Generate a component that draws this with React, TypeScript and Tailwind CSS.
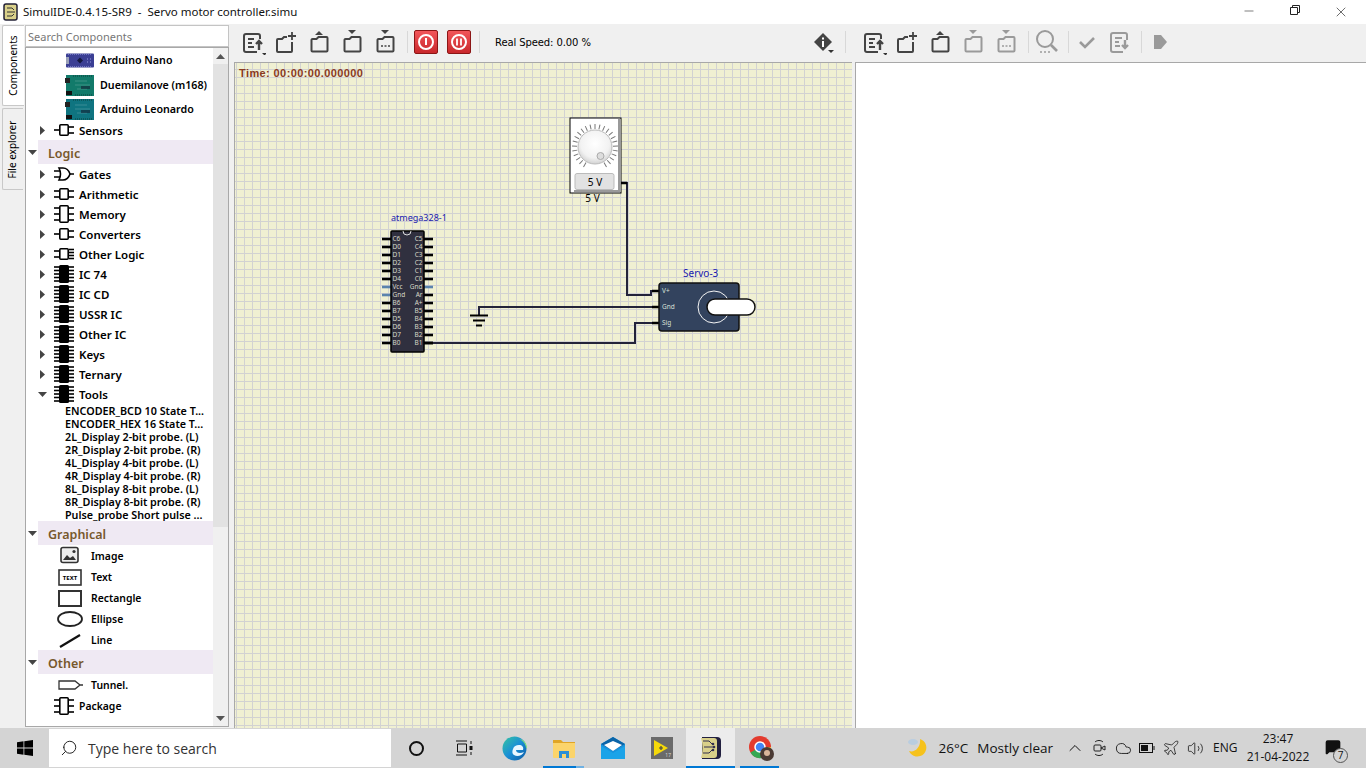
import type { ReactNode } from "react";
import { Search, Minus, X, ChevronUp, Volume2, Plane, Cloud, MessageSquare } from "lucide-react";

const leftPins = ["C6", "D0", "D1", "D2", "D3", "D4", "Vcc", "Gnd", "B6", "B7", "D5", "D6", "D7", "B0"];
const rightPins = ["C5", "C4", "C3", "C2", "C1", "C0", "Gnd", "Ar", "A+", "B5", "B4", "B3", "B2", "B1"];

const tools = [
    "ENCODER_BCD 10 State T...",
    "ENCODER_HEX 16 State T...",
    "2L_Display 2-bit probe. (L)",
    "2R_Display 2-bit probe. (R)",
    "4L_Display 4-bit probe. (L)",
    "4R_Display 4-bit probe. (R)",
    "8L_Display 8-bit probe. (L)",
    "8R_Display 8-bit probe. (R)",
    "Pulse_probe Short pulse ...",
];

function Arrow({ open }: { open?: boolean }) {
    return (
        <svg width="9" height="9" viewBox="0 0 9 9">
            {open ? <path d="M0 2h9L4.5 7z" fill="#444" /> : <path d="M2 0l5 4.5L2 9z" fill="#444" />}
        </svg>
    );
}

function PartIcon({ kind }: { kind: "one" | "two" | "tall" | "gate" | "mix" | "ic" }) {
    if (kind === "ic") {
        return (
            <svg width="22" height="20" viewBox="0 0 22 20">
                <rect x="6" y="1" width="10" height="18" rx="1.5" fill="#000" />
                {[3, 6.5, 10, 13.5, 17].map((y) => (
                    <path key={y} d={`M1 ${y}h20`} stroke="#000" strokeWidth="1.6" />
                ))}
            </svg>
        );
    }
    if (kind === "gate") {
        return (
            <svg width="22" height="20" viewBox="0 0 22 20">
                <path d="M6 4h4c4 0 6 3 7 6-1 3-3 6-7 6H6c2-4 2-8 0-12z" fill="#fff" stroke="#000" strokeWidth="1.6" />
                <path d="M1 7h6M1 13h6M17 10h4" stroke="#000" strokeWidth="1.6" />
            </svg>
        );
    }
    const tall = kind === "tall";
    const rows = tall ? [4, 10, 16] : kind === "one" ? [10] : [7, 13];
    return (
        <svg width="22" height="20" viewBox="0 0 22 20">
            <rect x="6.8" y={tall ? 1.8 : 4.8} width="8.4" height={tall ? 16.4 : 10.4} rx="1" fill="#fff" stroke="#000" strokeWidth="1.6" />
            {(kind === "mix" ? [7, 13] : rows).map((y) => (
                <path key={y} d={`M1 ${y}h5`} stroke="#000" strokeWidth="1.6" />
            ))}
            {(kind === "one" ? [7, 13] : kind === "mix" ? [5.5, 8.5, 11.5, 14.5] : rows).map((y) => (
                <path key={y} d={`M16 ${y}h5`} stroke="#000" strokeWidth="1.6" />
            ))}
        </svg>
    );
}

function Board({ color, nano }: { color: string; nano?: boolean }) {
    if (nano) {
        return (
            <svg width="28" height="15" viewBox="0 0 28 15">
                <rect width="28" height="14" y="0.5" rx="1" fill="#3b3f94" />
                <rect x="0" y="4" width="3" height="7" fill="#9aa0b8" />
                <path d="M11 7.5l3-3 3 3-3 3z" fill="#14183f" />
                <path d="M2 1.5h24M2 13.5h24" stroke="#7277c4" strokeDasharray="1 1" />
                <path d="M21 6h1M24 6h1M21 9h1M24 9h1" stroke="#9aa0e0" />
            </svg>
        );
    }
    return (
        <svg width="29" height="21" viewBox="0 0 29 21">
            <rect x="1" y="0" width="28" height="21" fill={color} />
            <rect x="0" y="3" width="5" height="5" fill="#222" />
            <rect x="1" y="16" width="6" height="4" fill="#111" />
            <path d="M8 1h19M10 20h17" stroke="#0c3d38" strokeDasharray="1 1" />
            <path d="M10 6h12M10 10h15M12 14h10" stroke="#ffffff" strokeOpacity="0.18" />
            <rect x="16" y="11" width="9" height="3" fill="#123" opacity="0.6" />
        </svg>
    );
}

function GraphicIcon({ kind }: { kind: string }) {
    return (
        <svg width="26" height="20" viewBox="0 0 26 20">
            {kind === "image" && (
                <g>
                    <rect x="4" y="1.5" width="17" height="15" rx="2" fill="#eee" stroke="#333" strokeWidth="1.6" />
                    <path d="M6 14l4-5 3 3 3-2 3 4z" fill="#333" />
                    <circle cx="17" cy="5.5" r="1.6" fill="#333" />
                </g>
            )}
            {kind === "text" && (
                <g>
                    <rect x="2" y="3" width="22" height="15" fill="#fff" stroke="#333" strokeWidth="1.6" />
                    <text x="13" y="13" textAnchor="middle" className="fill-black text-[6px] font-bold">TEXT</text>
                </g>
            )}
            {kind === "rect" && <rect x="2" y="3" width="22" height="15" fill="#fff" stroke="#333" strokeWidth="2" />}
            {kind === "ellipse" && <ellipse cx="13" cy="10" rx="12" ry="7" fill="#fff" stroke="#222" strokeWidth="1.8" />}
            {kind === "line" && <path d="M3 17L23 5" stroke="#111" strokeWidth="2.2" />}
            {kind === "tunnel" && <path d="M2 6h16l5 4-5 4H2zM23 10h3" fill="#fff" stroke="#333" strokeWidth="1.3" />}
        </svg>
    );
}

function TreeRow({ label, kind, open }: { label: string; kind: "one" | "two" | "tall" | "gate" | "mix" | "ic"; open?: boolean }) {
    return (
        <div className="flex h-5 items-center">
            <div className="flex w-[27px] justify-end pr-[6px]"><Arrow open={open} /></div>
            <PartIcon kind={kind} />
            <span className="ml-[4px] pt-[2px] text-[11.5px] font-semibold">{label}</span>
        </div>
    );
}

function BoardRow({ label, children, tall }: { label: string; children: ReactNode; tall?: boolean }) {
    return (
        <div className={`flex items-center ${tall ? "h-[25px]" : "h-6"}`}>
            <div className="flex w-[74px] justify-end pr-[6px]">{children}</div>
            <span className="text-[10.7px] font-semibold">{label}</span>
        </div>
    );
}

function Category({ label }: { label: string }) {
    return (
        <div className="flex h-6 items-center">
            <div className="flex w-[12px] justify-center"><Arrow open /></div>
            <div className="flex h-full flex-1 items-center bg-[#efe9f3] pl-[10px] pt-[4px] text-[12.5px] font-semibold text-[#77582c]">{label}</div>
        </div>
    );
}

function GraphicRow({ label, kind }: { label: string; kind: string }) {
    return (
        <div className="flex h-[21px] items-center">
            <div className="flex w-[57px] justify-end"><GraphicIcon kind={kind} /></div>
            <span className="ml-[8px] pt-[2px] text-[10.4px] font-semibold">{label}</span>
        </div>
    );
}

function ToolIcon({ kind, dim }: { kind: string; dim?: boolean }) {
    const c = dim ? "#9a9a9a" : "#444";
    const folder = "M2.5 22.5a1 1 0 0 1-1-1V11a1 1 0 0 1 1-1h4l2-2h8a1 1 0 0 1 1 1v12.5a1 1 0 0 1-1 1z";
    return (
        <svg width="24" height="26" viewBox="0 0 24 26" fill="none" stroke={c} strokeWidth="2">
            {kind === "listUp" && (
                <g>
                    <path d="M15 23H4a2 2 0 0 1-2-2V7a2 2 0 0 1 2-2h12a2 2 0 0 1 2 2v3" />
                    <path d="M6 10h6M6 14h4M6 18h6" />
                    <path d="M17 21v-8M14 15l3-3 3 3" strokeWidth="2.4" />
                    <path d="M20 24h5l-2.5 2.5z" fill="#333" stroke="none" />
                </g>
            )}
            {kind === "listDown" && (
                <g>
                    <path d="M15 23H5a2 2 0 0 1-2-2V6a2 2 0 0 1 2-2h12a2 2 0 0 1 2 2v5" />
                    <path d="M7 9h7M7 13h4M7 17h5" />
                    <path d="M17 11v8M14 16l3 3 3-3" strokeWidth="2.4" />
                </g>
            )}
            {kind === "plus" && (
                <g>
                    <path d="M17 13v9a1 1 0 0 1-1 1H3a1 1 0 0 1-1-1V11a1 1 0 0 1 1-1h4l2-2h3" />
                    <path d="M17 3v8M13 7h8" strokeWidth="1.8" />
                </g>
            )}
            {kind === "up" && (
                <g>
                    <path d={folder} transform="translate(2 0)" />
                    <path d="M7 6l4-4 4 4z" fill={c} stroke="none" />
                </g>
            )}
            {kind === "down" && (
                <g>
                    <path d={folder} transform="translate(2 0)" />
                    <path d="M7 1h8l-4 4z" fill={c} stroke="none" />
                </g>
            )}
            {kind === "dots" && (
                <g>
                    <path d={folder} transform="translate(2 0)" />
                    <path d="M7 1h8l-4 4z" fill={c} stroke="none" />
                    <path d="M7 17h2M10.5 17h2M14 17h2" strokeWidth="1.6" />
                </g>
            )}
            {kind === "search" && (
                <g>
                    <circle cx="10" cy="10" r="8" />
                    <path d="M16 16l6 6" strokeWidth="2.6" />
                    <path d="M5 23h2M9 23h2M13 23h2" strokeWidth="1.4" />
                </g>
            )}
            {kind === "check" && <path d="M5 13l5 5 9-9" strokeWidth="2.6" />}
            {kind === "play" && <path d="M6 6h7l6 7-6 7H6z" fill={c} stroke="none" />}
        </svg>
    );
}

function ToolSlot({ kind, dim }: { kind: string; dim?: boolean }) {
    return <div className="flex w-[33px] justify-center"><ToolIcon kind={kind} dim={dim} /></div>;
}

function Sep() {
    return <div className="h-[22px] w-px bg-[#d8d8d8]" />;
}

function PowerButton({ pause }: { pause?: boolean }) {
    return (
        <div className="flex h-6 w-6 items-center justify-center rounded-[2px] border border-[#8c1515] bg-[linear-gradient(#f2565a,#c9282c)]">
            <svg width="18" height="18" viewBox="0 0 18 18" fill="none" stroke="#fff">
                <circle cx="9" cy="9" r="7" strokeWidth="2" />
                {pause ? <path d="M7 5.5v7M11 5.5v7" strokeWidth="1.8" /> : <path d="M9 5v7" strokeWidth="2" />}
            </svg>
        </div>
    );
}

function Circuit() {
    const ticks = Array.from({ length: 25 }, (_, i) => -150 + i * 12.5);
    return (
        <svg viewBox="235 63 617 665" className="absolute inset-0 h-full w-full">
            <text x="391" y="221" className="fill-[#1a1ab0] text-[9px]">atmega328-1</text>
            {leftPins.map((p, i) => (
                <path key={p + i} d={`M382 ${239 + i * 8}h9`} stroke={i === 6 || i === 7 ? "#5b83ad" : "#000"} strokeWidth="2.6" />
            ))}
            {rightPins.map((p, i) => (
                <path key={p + i} d={`M424 ${239 + i * 8}h9`} stroke={i === 6 ? "#5b83ad" : "#000"} strokeWidth="2.6" />
            ))}
            <rect x="391" y="231" width="33" height="121" rx="1" fill="#30303f" stroke="#000" strokeWidth="1.5" />
            <path d="M403 231a4 4 0 0 0 8 0" fill="none" stroke="#ddd" />
            {leftPins.map((p, i) => (
                <text key={p + i} x="392.5" y={241 + i * 8} className="fill-[#d8d8c8] text-[6.5px]">{p}</text>
            ))}
            {rightPins.map((p, i) => (
                <text key={p + i} x="422.5" y={241 + i * 8} textAnchor="end" className="fill-[#d8d8c8] text-[6.5px]">{p}</text>
            ))}

            <g fill="none" stroke="#23233a" strokeWidth="2">
                <path d="M621 183h6v112h24v-4h9" />
                <path d="M479 316v-9h181" />
                <path d="M424 343h211v-20h25" />
            </g>
            <path d="M470 315.5h18M473 320.5h12M476 325.5h6" stroke="#000" strokeWidth="2" />
            <path d="M621 183h6M652 291h8M652 307h8M652 323h8M424 343h9" stroke="#000" strokeWidth="2.4" />

            <rect x="570" y="118" width="51" height="75" fill="#fff" stroke="#000" />
            <path d="M618 119h3v73h-47v-2h44z" fill="#9a9a9a" />
            {ticks.map((t) => (
                <path key={t} d="M595 124v5" stroke="#777" transform={`rotate(${t} 595 147)`} />
            ))}
            <defs>
                <radialGradient id="knob" cx="50%" cy="40%" r="60%">
                    <stop offset="0%" stopColor="#fff" />
                    <stop offset="70%" stopColor="#f2f2f2" />
                    <stop offset="100%" stopColor="#d2d2d2" />
                </radialGradient>
            </defs>
            <circle cx="595" cy="147" r="17" fill="url(#knob)" stroke="#bbb" />
            <circle cx="600.5" cy="156" r="3.5" fill="#ddd" stroke="#aaa" />
            <rect x="575" y="173.500" width="39" height="16" rx="2" fill="#e2e2e2" stroke="#bbb" />
            <text x="595" y="186" textAnchor="middle" className="fill-black text-[10px]">5 V</text>
            <text x="592.500" y="202" textAnchor="middle" className="fill-black text-[10px]">5 V</text>

            <text x="683" y="277" className="fill-[#1a1ab0] text-[10px]">Servo-3</text>
            <rect x="659" y="283" width="80" height="48" rx="3" fill="#33435e" stroke="#111" strokeWidth="1.5" />
            <text x="662" y="293" className="fill-[#d8e0d8] text-[6.5px]">V+</text>
            <text x="662" y="309" className="fill-[#d8e0d8] text-[6.5px]">Gnd</text>
            <text x="662" y="325" className="fill-[#d8e0d8] text-[6.5px]">Sig</text>
            <circle cx="714" cy="307" r="16" fill="none" stroke="#f5f5f5" />
            <rect x="707" y="299" width="48" height="16" rx="8" fill="#fff" stroke="#111" strokeWidth="1.5" />
        </svg>
    );
}

function TrayIcon({ children, w }: { children: ReactNode; w: string }) {
    return <div className={`flex justify-center ${w}`}>{children}</div>;
}

function TaskSlot({ children, active, bar }: { children: ReactNode; active?: boolean; bar?: string }) {
    return (
        <div className={`relative flex h-full w-[49px] items-center justify-center ${active ? "bg-[#ececec]" : ""}`}>
            {children}
            {bar && <div className={`absolute bottom-0 h-[2px] ${bar}`} />}
        </div>
    );
}

export default function App() {
    return (
        <div className="flex h-[768px] w-[1366px] flex-col overflow-hidden bg-[#f0f0f0] font-['Noto_Sans',sans-serif] text-black">
            {/* title bar */}
            <div className="flex h-6 items-center bg-white">
                <svg width="16" height="18" viewBox="0 0 16 18" className="ml-[3px]">
                    <rect x="1" y="1" width="13" height="16" rx="2" fill="#d9d08a" stroke="#222036" strokeWidth="1.5" />
                    <path d="M4 5h5l2 2M4 9h8M4 13h5l2-2" stroke="#333" fill="none" />
                </svg>
                <span className="ml-[4px] text-[11.5px] text-[#111]">SimulIDE-0.4.15-SR9&nbsp; -&nbsp; Servo motor controller.simu</span>
                <div className="ml-auto mr-[2px] flex text-[#222]">
                    <div className="flex w-[46px] justify-center"><Minus size={14} strokeWidth={1} /></div>
                    <div className="flex w-[46px] justify-center">
                        <svg width="12" height="12" viewBox="0 0 12 12" fill="none" stroke="#222">
                            <path d="M1.500 3.500h7v7h-7zM3.500 3.500v-2h7v7h-2" />
                        </svg>
                    </div>
                    <div className="flex w-[46px] justify-center"><X size={16} strokeWidth={1} /></div>
                </div>
            </div>

            <div className="flex min-h-0 flex-1">
                {/* side tabs */}
                <div className="flex w-[25px] flex-col pl-[2px] pt-px">
                    <div className="flex h-[81px] w-[22px] items-center justify-center rounded-l-[2px] border border-r-0 border-[#c8c8c8] bg-white">
                        <span className="-rotate-90 whitespace-nowrap text-[10px]">Components</span>
                    </div>
                    <div className="mt-[2px] flex h-[82px] w-[21px] items-center justify-center rounded-l-[2px] border border-r-0 border-[#c8c8c8] bg-[#f0f0f0]">
                        <span className="-rotate-90 whitespace-nowrap text-[10px]">File explorer</span>
                    </div>
                </div>

                {/* components panel */}
                <div className="flex w-[204px] flex-col pt-px">
                    <div className="flex h-[22px] items-center border border-[#c4c4c4] bg-white pl-[2px] pt-[2px] text-[11px] text-[#777]">Search Components</div>
                    <div className="flex h-[680px] border border-[#a8a8a8] bg-white">
                        <div className="flex-1 overflow-hidden">
                            <BoardRow label="Arduino Nano" tall><Board color="#3b3f94" nano /></BoardRow>
                            <BoardRow label="Duemilanove (m168)"><Board color="#127a6a" /></BoardRow>
                            <BoardRow label="Arduino Leonardo"><Board color="#0f7480" /></BoardRow>
                            <div className="-mt-px"><TreeRow label="Sensors" kind="one" /></div>
                            <Category label="Logic" />
                            <TreeRow label="Gates" kind="gate" />
                            <TreeRow label="Arithmetic" kind="two" />
                            <TreeRow label="Memory" kind="tall" />
                            <TreeRow label="Converters" kind="one" />
                            <TreeRow label="Other Logic" kind="mix" />
                            {["IC 74", "IC CD", "USSR IC", "Other IC", "Keys", "Ternary"].map((l) => (
                                <TreeRow key={l} label={l} kind="ic" />
                            ))}
                            <TreeRow label="Tools" kind="ic" open />
                            {tools.map((t) => (
                                <div key={t} className="flex h-[13px] items-center whitespace-nowrap pl-[39px] pt-[2px] text-[10.75px] font-semibold">{t}</div>
                            ))}
                            <Category label="Graphical" />
                            <GraphicRow label="Image" kind="image" />
                            <GraphicRow label="Text" kind="text" />
                            <GraphicRow label="Rectangle" kind="rect" />
                            <GraphicRow label="Ellipse" kind="ellipse" />
                            <GraphicRow label="Line" kind="line" />
                            <Category label="Other" />
                            <GraphicRow label="Tunnel." kind="tunnel" />
                            <div className="flex h-[21px] items-center">
                                <div className="w-[27px]" />
                                <PartIcon kind="tall" />
                                <span className="ml-[4px] pt-[2px] text-[10.4px] font-semibold">Package</span>
                            </div>
                        </div>
                        {/* scrollbar */}
                        <div className="flex w-[15px] flex-col bg-[#f0f0f0]">
                            <div className="flex h-[16px] items-center justify-center">
                                <svg width="9" height="5" viewBox="0 0 9 5"><path d="M0 5l4.5-5L9 5z" fill="#555" /></svg>
                            </div>
                            <div className="h-[463px] bg-[#e2e2e2]" />
                            <div className="mt-auto flex h-[16px] items-center justify-center">
                                <svg width="9" height="5" viewBox="0 0 9 5"><path d="M0 0l4.5 5L9 0z" fill="#555" /></svg>
                            </div>
                        </div>
                    </div>
                </div>

                <div className="w-[5px]" />

                {/* toolbars and editors */}
                <div className="flex flex-1 flex-col">
                    <div className="flex h-[38px] items-center pb-[2px]">
                        <div className="flex w-[621px] items-center pl-[3px]">
                            <ToolSlot kind="listUp" />
                            <ToolSlot kind="plus" />
                            <ToolSlot kind="up" />
                            <ToolSlot kind="down" />
                            <ToolSlot kind="dots" />
                            <div className="ml-[5px] mr-[6px]"><Sep /></div>
                            <PowerButton />
                            <div className="w-[9px]" />
                            <PowerButton pause />
                            <div className="ml-[8px] mr-[15px]"><Sep /></div>
                            <span className="font-['DejaVu_Sans',sans-serif] text-[10px] tracking-[-0.1px]">Real Speed: 0.00 %</span>
                            <div className="ml-auto mr-[9px] flex items-center">
                                <div className="relative mr-[12px]">
                                    <svg width="20" height="20" viewBox="0 0 20 20">
                                        <path d="M10 1l9 9-9 9-9-9z" fill="#444" />
                                        <path d="M10 5.500v2M10 9v6" stroke="#fff" strokeWidth="2" />
                                    </svg>
                                    <svg width="6" height="3" viewBox="0 0 6 3" className="absolute -right-[1px] top-[18px]"><path d="M0 0h6L3 3z" fill="#333" /></svg>
                                </div>
                                <Sep />
                            </div>
                        </div>
                        <div className="flex items-center pl-[3px]">
                            <ToolSlot kind="listUp" />
                            <ToolSlot kind="plus" />
                            <ToolSlot kind="up" />
                            <ToolSlot kind="down" dim />
                            <ToolSlot kind="dots" dim />
                            <div className="ml-[5px] mr-[6px]"><Sep /></div>
                            <ToolIcon kind="search" dim />
                            <div className="ml-[9px] mr-[6px]"><Sep /></div>
                            <ToolIcon kind="check" dim />
                            <div className="w-[9px]" />
                            <ToolIcon kind="listDown" dim />
                            <div className="ml-[9px] mr-[6px]"><Sep /></div>
                            <ToolIcon kind="play" dim />
                        </div>
                    </div>
                    <div className="flex min-h-0 flex-1">
                        <div className="relative w-[618px] border-l border-t border-[#a8a8a8] bg-[#f0f0d2] bg-[linear-gradient(#d2d2d2_1px,transparent_1px),linear-gradient(90deg,#d2d2d2_1px,transparent_1px)] bg-[size:8px_8px] bg-[position:1px_6px]">
                            <Circuit />
                            <div className="absolute left-[4px] top-[2px] font-['Liberation_Sans',sans-serif] text-[11px] font-bold tracking-[0.4px] text-[#8a3a1e]">Time: 00:00:00.000000</div>
                        </div>
                        <div className="w-[3px]" />
                        <div className="flex-1 border-l border-t border-[#a8a8a8] bg-white" />
                    </div>
                </div>
            </div>

            {/* taskbar */}
            <div className="flex h-10 items-center bg-[#d4d4d4] font-['Open_Sans',sans-serif]">
                <div className="flex w-[49px] justify-center">
                    <svg width="16" height="16" viewBox="0 0 16 16" fill="#000"><path d="M0 2.200l6.500-.9v6.300H0zM7.300 1.200L16 0v7.600H7.300zM0 8.400h6.500v6.300L0 13.800zM7.300 8.400H16V16l-8.700-1.200z" /></svg>
                </div>
                <div className="flex h-[38px] w-[342px] items-center bg-white pl-[11px] text-[14px] text-[#333]">
                    <Search size={18} strokeWidth={1.3} className="-scale-x-100 text-[#222]" />
                    <span className="ml-[10px]">Type here to search</span>
                </div>
                <div className="ml-px flex h-full">
                    <TaskSlot>
                        <div className="h-[15px] w-[15px] rounded-full border-2 border-[#111]" />
                    </TaskSlot>
                    <TaskSlot>
                        <svg width="18" height="16" viewBox="0 0 18 16" fill="none" stroke="#111" className="-ml-[3px]"><path d="M1 1h11M1 15h11M2.500 4h9v8h-9zM16 1v3M16 12v3" /><rect x="14.500" y="6" width="3" height="4" fill="#111" stroke="none" /></svg>
                    </TaskSlot>
                    <TaskSlot>
                        <svg width="25" height="25" viewBox="0 0 25 25">
                            <defs>
                                <linearGradient id="edge" x1="0" y1="0" x2="1" y2="1"><stop offset="0" stopColor="#36c5a0" /><stop offset="0.5" stopColor="#1a8fd6" /><stop offset="1" stopColor="#0c59a4" /></linearGradient>
                            </defs>
                            <circle cx="12.500" cy="12.500" r="12" fill="url(#edge)" />
                            <path d="M11 13c1-3 3-4 6-4 3 0 5 2 4 5h-7c0 3 4 4 8 2-2 4-7 5-10 3-2-1-2-4-1-6z" fill="#e8f6ff" />
                            <path d="M24 12c0-3-3-8-7-9 4 0 8 4 8 9z" fill="#7fe07a" />
                        </svg>
                    </TaskSlot>
                    <TaskSlot bar="inset-x-[4px] bg-[linear-gradient(90deg,#0078d4_80%,#6fb1e3_80%)]">
                        <svg width="22" height="20" viewBox="0 0 22 20">
                            <path d="M0 2h8l2 2h12v3H0z" fill="#e0a526" />
                            <path d="M0 5h22v14a1 1 0 0 1-1 1H1a1 1 0 0 1-1-1z" fill="#fbd46b" />
                            <path d="M6 20v-7h10v7h-3v-4H9v4z" fill="#2d8fd5" />
                        </svg>
                    </TaskSlot>
                    <TaskSlot>
                        <svg width="24" height="22" viewBox="0 0 24 22">
                            <path d="M0 7l12-7 12 7v15H0z" fill="#1793dd" />
                            <path d="M0 7l12-7 12 7-12 7z" fill="#0b64a8" />
                            <path d="M3 8l9-4 9 4-9 6z" fill="#fff" />
                            <path d="M0 9l12 7 12-7v13H0z" fill="#1ba3e8" />
                        </svg>
                    </TaskSlot>
                    <TaskSlot>
                        <svg width="22" height="22" viewBox="0 0 22 22">
                            <rect width="22" height="22" fill="#6a6a6a" />
                            <path d="M3 3l14 8-14 8z" fill="#f5d90a" />
                            <path d="M8 11h4M10 9v4" stroke="#444" strokeWidth="1.2" />
                            <text x="20" y="20" textAnchor="end" className="fill-[#ddd] text-[5px]">17</text>
                        </svg>
                    </TaskSlot>
                    <TaskSlot active bar="inset-x-0 bg-[#0078d4]">
                        <svg width="23" height="24" viewBox="0 0 23 24">
                            <path d="M3 1h15a4 4 0 0 1 4 4v14a4 4 0 0 1-4 4H3z" fill="#222040" />
                            <path d="M2 2h13a3 3 0 0 1 3 3v14a3 3 0 0 1-3 3H2c2-6 2-14 0-20z" fill="#d9d08a" />
                            <path d="M4 5h6l3 3M5 11h9M4 17h6l3-3" stroke="#333050" fill="none" />
                            <circle cx="14" cy="8" r="1.300" fill="#333050" /><circle cx="15" cy="11" r="1.300" fill="#333050" /><circle cx="14" cy="14" r="1.300" fill="#333050" />
                        </svg>
                    </TaskSlot>
                    <TaskSlot bar="inset-x-[5px] bg-[#0078d4]">
                        <svg width="26" height="26" viewBox="0 0 26 26" className="ml-[2px]">
                            <circle cx="12" cy="12" r="11" fill="#e33b2e" />
                            <path d="M12 12L2.500 17.500A11 11 0 0 0 14 23z" fill="#36a853" />
                            <path d="M12 12l2 11A11 11 0 0 0 23 12z" fill="#fbc02d" />
                            <circle cx="12" cy="12" r="5" fill="#4285f4" stroke="#fff" strokeWidth="1.500" />
                            <circle cx="19" cy="19" r="7" fill="#4a3a34" />
                            <circle cx="19" cy="18" r="3" fill="#d9b49a" />
                        </svg>
                    </TaskSlot>
                </div>

                <div className="ml-auto flex h-full items-center text-[#111]">
                    <svg width="22" height="22" viewBox="0 0 22 22" className="mr-[10px]">
                        <path d="M13 2a9 9 0 1 1-11 12c6 2 12-4 11-12z" fill="#f6c21c" />
                        <ellipse cx="6" cy="5" rx="5" ry="3" fill="#b9cde0" />
                    </svg>
                    <span className="text-[13.5px]">26°C</span>
                    <span className="ml-[9px] text-[13.5px]">Mostly clear</span>
                    <TrayIcon w="ml-[10px] w-[24px]"><ChevronUp size={20} strokeWidth={1.2} /></TrayIcon>
                    <TrayIcon w="w-[24px]">
                        <svg width="15" height="18" viewBox="0 0 15 18" fill="none" stroke="#222"><path d="M3 3c2-2 6-2 8 0M3 15c2 2 6 2 8 0" /><rect x="2" y="6" width="7" height="6" rx="1" /><path d="M9 9l4-2v4z" /></svg>
                    </TrayIcon>
                    <TrayIcon w="w-[24px]"><Cloud size={17} strokeWidth={1.2} fill="#d4d4d4" /></TrayIcon>
                    <TrayIcon w="w-[24px]">
                        <svg width="16" height="10" viewBox="0 0 16 10" fill="none" stroke="#111"><rect x="0.500" y="0.500" width="13" height="9" /><rect x="2" y="2" width="7" height="6" fill="#111" stroke="none" /><path d="M15 3v4" /></svg>
                    </TrayIcon>
                    <TrayIcon w="w-[24px]"><Plane size={18} strokeWidth={1} /></TrayIcon>
                    <TrayIcon w="w-[24px]"><Volume2 size={17} strokeWidth={1.1} /></TrayIcon>
                    <span className="ml-[6px] w-[30px] text-[12px]">ENG</span>
                    <div className="flex w-[70px] flex-col items-center text-[12px] leading-[18px]">
                        <span>23:47</span>
                        <span>21-04-2022</span>
                    </div>
                    <div className="relative -mt-[3px] ml-[12px] mr-[21px] w-[20px]">
                        <MessageSquare size={16} fill="#111" />
                        <div className="absolute left-[8px] top-[9px] flex h-[15px] w-[15px] items-center justify-center rounded-full border border-[#555] bg-[#d4d4d4] text-[10px]">7</div>
                    </div>
                </div>
            </div>
        </div>
    );
}
